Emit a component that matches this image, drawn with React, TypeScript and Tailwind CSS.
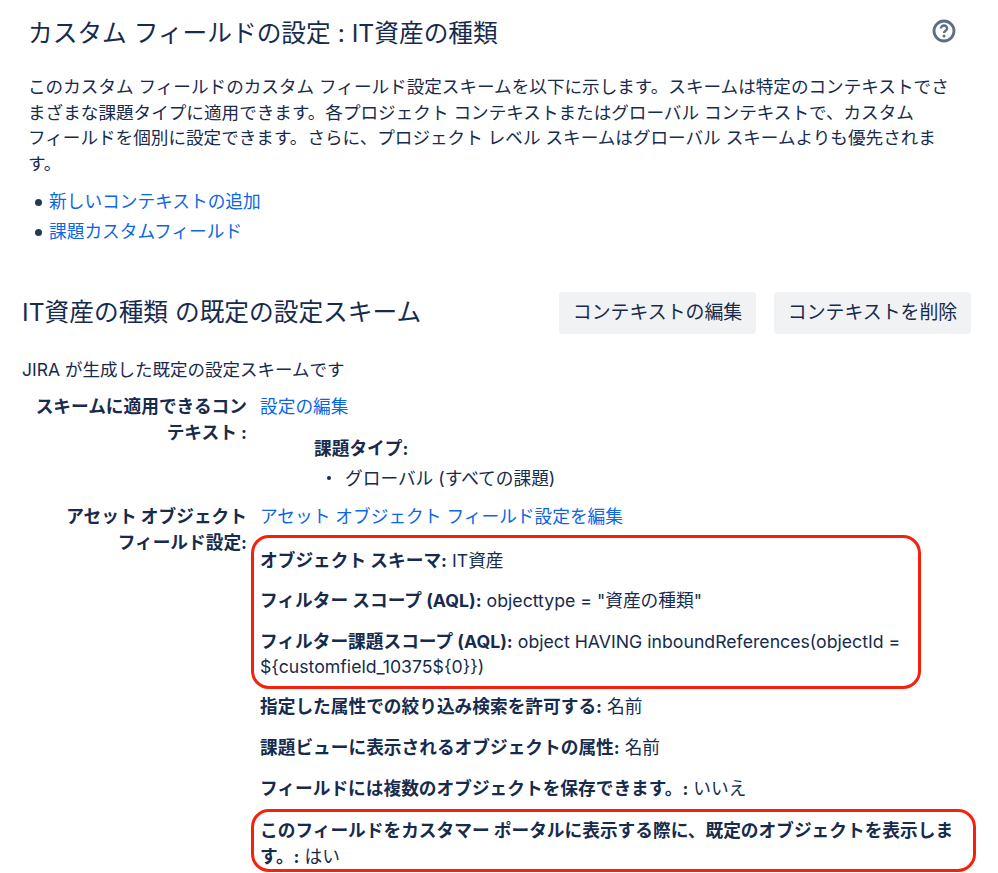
import type { ReactNode } from 'react';

const Bullet = ({ children }: { children: ReactNode }) => (
  <li className="flex items-center h-[30px]">
    <span className="w-[7px] h-[7px] rounded-full bg-[#253858] ml-[7px] mr-[7px] shrink-0" />
    <a href="#" className="text-[#0c66e4]">{children}</a>
  </li>
);

const Setting = ({ label, value }: { label: string; value: ReactNode }) => (
  <p>
    <b className="font-bold">{label}</b> {value}
  </p>
);

export default function App() {
  return (
    <div className="w-[998px] h-[873px] overflow-hidden bg-white text-[#172b4d] text-[17.7px] leading-[25.5px] font-['Inter','Noto_Sans_CJK_JP',sans-serif]">
      <div className="pl-[28px] pr-[30px] pt-[14px]">
        <div className="flex justify-between items-start">
          <h1 className="text-[24.7px] leading-[38px] font-normal">カスタム フィールドの設定 : IT資産の種類</h1>
          <svg className="w-[24px] h-[24px] mt-[5px] mr-[12px]" viewBox="0 0 24 24" fill="none">
            <circle cx="12" cy="12" r="10" stroke="#5e6c84" strokeWidth="2.8" />
            <path d="M8.9 9.6a3.1 3.1 0 0 1 6.2 0c0 2-3.1 2.2-3.1 4.3" stroke="#5e6c84" strokeWidth="2.4" />
            <circle cx="12" cy="17" r="1.5" fill="#5e6c84" />
          </svg>
        </div>
        <p className="mt-[22px] whitespace-nowrap text-[17.6px]">
          このカスタム フィールドのカスタム フィールド設定スキームを以下に示します。スキームは特定のコンテキストでさ<br />
          まざまな課題タイプに適用できます。各プロジェクト コンテキストまたはグローバル コンテキストで、カスタム<br />
          フィールドを個別に設定できます。さらに、プロジェクト レベル スキームはグローバル スキームよりも優先されま<br />
          す。
        </p>
        <ul className="mt-[11px]">
          <Bullet>新しいコンテキストの追加</Bullet>
          <Bullet>課題カスタムフィールド</Bullet>
        </ul>
      </div>

      <div className="pl-[22px] pr-[27px] mt-[44px]">
        <div className="flex justify-between items-center h-[44px]">
          <h2 className="text-[24.7px] font-normal">IT資産の種類 の既定の設定スキーム</h2>
          <div className="flex gap-[18px]">
            <button className="h-[42px] w-[197px] rounded-[4px] bg-[#f1f2f4] text-[#172b4d] text-[18.9px]">コンテキストの編集</button>
            <button className="h-[42px] w-[197px] rounded-[4px] bg-[#f1f2f4] text-[#172b4d] text-[18.9px]">コンテキストを削除</button>
          </div>
        </div>

        <p className="mt-[22px] text-[17.5px]">JIRA が生成した既定の設定スキームです</p>

        <div className="flex mt-[11px]">
          <div className="w-[225px] text-right font-bold shrink-0 leading-[26px]">スキームに適用できるコン<br />テキスト :</div>
          <div className="ml-[13px]">
            <a href="#" className="text-[#0c66e4]">設定の編集</a>
            <div className="ml-[54px] mt-[17px] font-bold">課題タイプ:</div>
            <div className="ml-[54px] mt-[4px] flex items-center">
              <span className="w-[4px] h-[4px] rounded-full bg-[#172b4d] ml-[13px] mr-[14px]" />
              グローバル (すべての課題)
            </div>
          </div>
        </div>

        <div className="flex mt-[13px]">
          <div className="w-[225px] text-right font-bold shrink-0 leading-[26px]">アセット オブジェクト<br />フィールド設定:</div>
          <div className="ml-[13px]">
            <a href="#" className="text-[#0c66e4]">アセット オブジェクト フィールド設定を編集</a>
            <div className="mt-[5px] -ml-[9px] w-[670px] border-[3px] border-[#f5210c] rounded-[18px] pl-[6px] pt-[10px] pb-[6px] flex flex-col gap-[15px]">
              <Setting label="オブジェクト スキーマ:" value="IT資産" />
              <Setting label="フィルター スコープ (AQL):" value={'objecttype = "資産の種類"'} />
              <Setting
                label="フィルター課題スコープ (AQL):"
                value={<>object HAVING inboundReferences(objectId =<br />{'${customfield_10375${0}})'}</>}
              />
            </div>
            <div className="mt-[5px] flex flex-col gap-[15.5px]">
              <Setting label="指定した属性での絞り込み検索を許可する:" value="名前" />
              <Setting label="課題ビューに表示されるオブジェクトの属性:" value="名前" />
              <Setting label="フィールドには複数のオブジェクトを保存できます。:" value="いいえ" />
            </div>
            <div className="mt-[8px] -ml-[9px] w-[725px] border-[3px] border-[#f5210c] rounded-[18px] pl-[6px] pt-[6px] whitespace-nowrap">
              <p><b>このフィールドをカスタマー ポータルに表示する際に、既定のオブジェクトを表示しま</b></p>
              <p><b>す。:</b> はい</p>
            </div>
          </div>
        </div>
      </div>
    </div>
  );
}
